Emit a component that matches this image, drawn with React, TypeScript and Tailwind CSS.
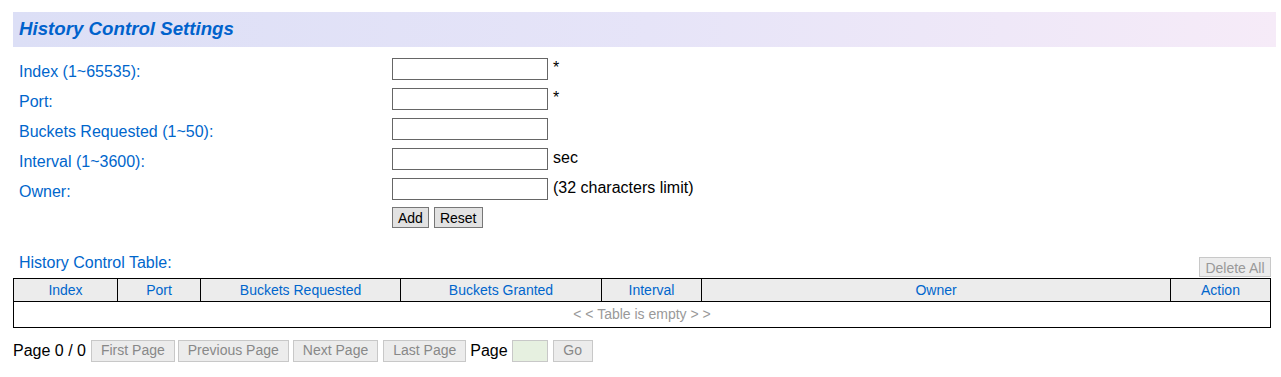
import React from "react";

const font = { fontFamily: '"Liberation Sans", Arial, sans-serif' };

function Row({ label, extra, mt }: { label: string; extra?: string; mt?: string }) {
  return (
    <div className={`flex items-center h-[22px] ${mt ?? "mt-[8px]"}`}>
      <div className="w-[379px] pl-[6px] text-[16px] leading-[18px] text-[#0066cc] pt-[5px]">{label}</div>
      <input className="w-[156px] h-[22px] border border-[#666] bg-white" />
      {extra && <span className="ml-[5px] text-[16px] leading-[18px] text-black -mt-[2px]">{extra}</span>}
    </div>
  );
}

const pageBtn =
  "h-[22px] px-[9px] border border-[#c8c8c8] bg-[#ececec] text-[14px] text-[#888] flex items-center";

export default function App() {
  const cols = [
    { n: "Index", w: "w-[104px]" },
    { n: "Port", w: "w-[83px]" },
    { n: "Buckets Requested", w: "w-[200px]" },
    { n: "Buckets Granted", w: "w-[201px]" },
    { n: "Interval", w: "w-[100px]" },
    { n: "Owner", w: "w-[469px]" },
    { n: "Action", w: "" },
  ];
  return (
    <div style={font} className="w-[1281px] h-[377px] bg-white pl-[13px] pt-[12px]">
      <div className="w-[1263px] h-[35px] bg-gradient-to-r from-[#dcdff6] via-[#e6e4f8] to-[#f6ebf8] flex items-center pl-[6px]">
        <span className="text-[18.7px] font-bold italic text-[#0062cc]">History Control Settings</span>
      </div>
      <Row label="Index (1~65535):" extra="*" mt="mt-[11px]" />
      <Row label="Port:" extra="*" />
      <Row label="Buckets Requested (1~50):" />
      <Row label="Interval (1~3600):" extra="sec" />
      <Row label="Owner:" extra="(32 characters limit)" />
      <div className="flex mt-[7px] ml-[379px] gap-[5px]">
        <button className="h-[21px] px-[5px] border border-[#777] bg-[#e2e2e2] text-[14px] text-black">Add</button>
        <button className="h-[21px] px-[5px] border border-[#777] bg-[#e2e2e2] text-[14px] text-black">Reset</button>
      </div>
      <div className="flex items-end justify-between w-[1258px] mt-[26px]">
        <span className="pl-[6px] text-[16px] leading-[18px] text-[#0066cc] mb-[6px]">History Control Table:</span>
        <button className="h-[20px] w-[72px] border border-[#c8c8c8] bg-[#ececec] text-[14px] text-[#999] mb-[1px]">
          Delete All
        </button>
      </div>
      <div className="w-[1258px] border border-black">
        <div className="flex h-[23px] bg-[#ececec] border-b border-black">
          {cols.map((c, i) => (
            <div
              key={c.n}
              className={`${c.w || "flex-1"} ${i < cols.length - 1 ? "border-r border-black" : ""} flex items-center justify-center text-[14px] text-[#0066cc]`}
            >
              {c.n}
            </div>
          ))}
        </div>
        <div className="h-[25px] flex items-center justify-center text-[14px] text-[#999]">
          &lt; &lt; Table is empty &gt; &gt;
        </div>
      </div>
      <div className="flex items-center mt-[11px] h-[23px]">
        <span className="text-[16px] text-black mr-[5px]">Page 0 / 0</span>
        <button className={pageBtn}>First Page</button>
        <button className={`${pageBtn} ml-[3px]`}>Previous Page</button>
        <button className={`${pageBtn} ml-[4px]`}>Next Page</button>
        <button className={`${pageBtn} ml-[5px]`}>Last Page</button>
        <span className="text-[16px] text-black ml-[4px] mr-[4px]">Page</span>
        <input className="w-[36px] h-[22px] border border-[#c8c8c8] bg-[#e6f0e0]" />
        <button className={`${pageBtn} ml-[5px] w-[40px] justify-center`}>Go</button>
      </div>
    </div>
  );
}
